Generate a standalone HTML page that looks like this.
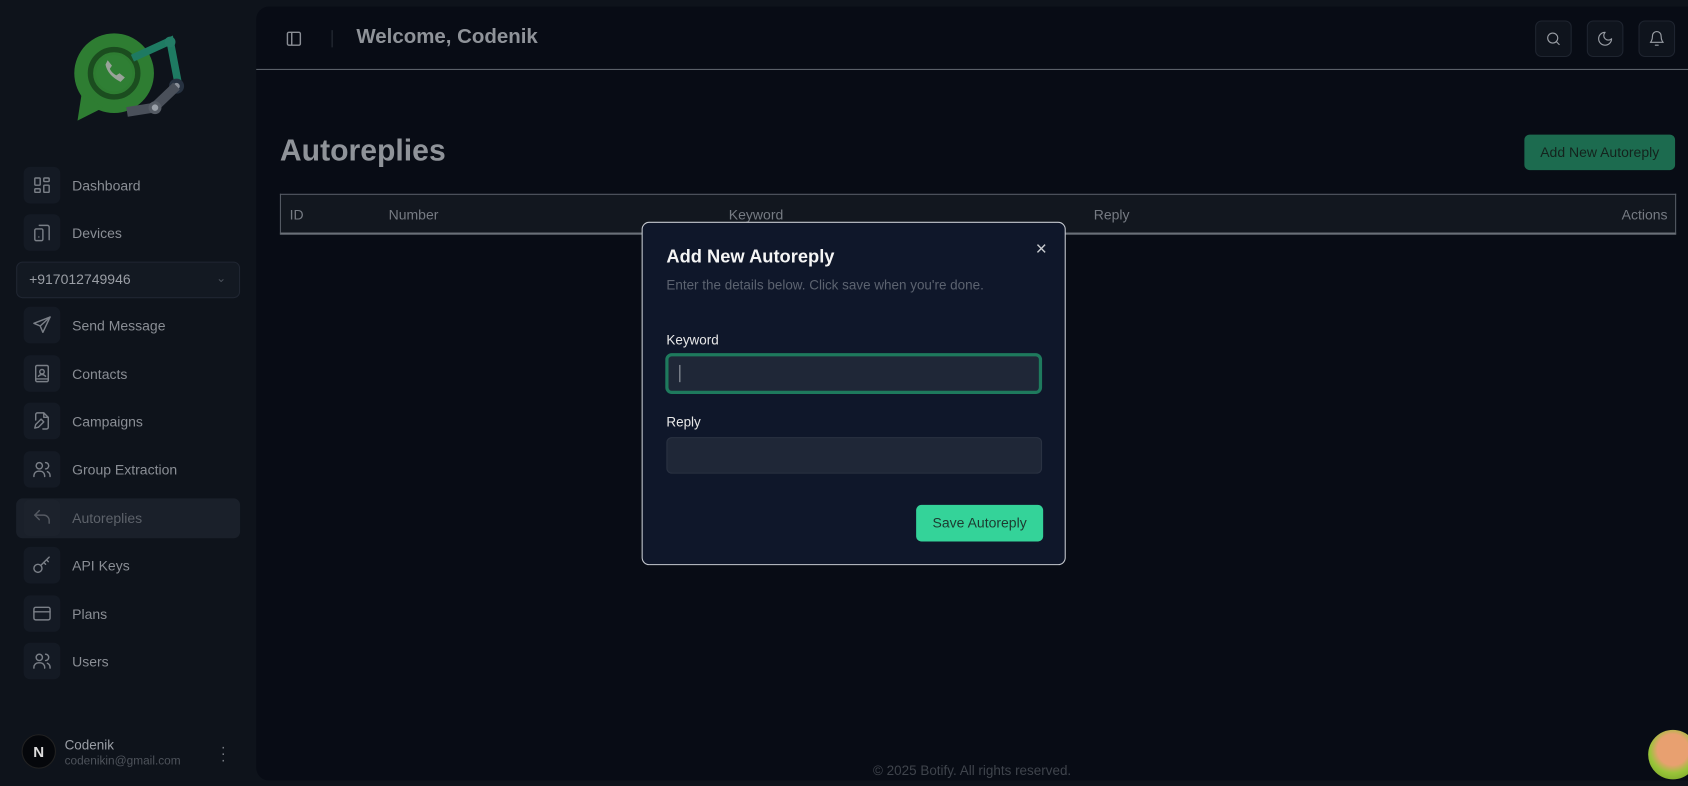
<!DOCTYPE html>
<html><head><meta charset="utf-8"><style>
*{box-sizing:border-box;margin:0;padding:0}
html,body{width:1688px;height:786px;overflow:hidden;background:#0e131b;font-family:"Liberation Sans",sans-serif}
#w{position:absolute;left:0;top:0;width:1568px;height:730px;transform:scale(1.07653);transform-origin:0 0;background:#0e131b}
.abs{position:absolute}
.side .it{position:absolute;left:22px;height:34px;display:flex;align-items:center;color:#8a8e95;font-size:13px}
.side .ic{width:34px;height:34px;border-radius:6px;background:#141a24;display:flex;align-items:center;justify-content:center;margin-right:11px}
.ic svg{width:20px;height:20px;fill:none;stroke:#7a7f87;stroke-width:1.6;stroke-linecap:round;stroke-linejoin:round}
.main{left:238px;top:6px;width:1330px;height:719px;background:#080c15;border-radius:12px 0 0 12px}
.hb{width:34px;height:34px;border:1px solid #1f2530;border-radius:6px;background:#0f141d;display:flex;align-items:center;justify-content:center;position:absolute;top:13px}
.hb svg{width:16px;height:16px;fill:none;stroke:#9a9ea5;stroke-width:1.6;stroke-linecap:round;stroke-linejoin:round}
</style></head><body><div id="w">
<div class="side">
 <svg class="abs" style="left:68px;top:30px" width="106" height="84" viewBox="0 0 106 84">
  <circle cx="38" cy="38" r="37" fill="#2e7d32"/>
  <polygon points="8,56 4,82 28,70" fill="#2e7d32"/>
  <circle cx="38" cy="38" r="22" fill="none" stroke="#1b4d1f" stroke-width="5"/>
  <circle cx="38" cy="38" r="17" fill="#2f7f34"/>
  <path d="M30 30 q2 10 14 16 l4-4 -5-4 -3 2 q-4-2-6-6 l2-3 -4-5z" fill="#9aa39a"/>
  <path d="M55 24 L90 8 L98 50" stroke="#1e7a62" stroke-width="7" fill="none"/>
  <circle cx="90" cy="9" r="5" fill="#237c66"/>
  <circle cx="96" cy="50" r="7" fill="#263140"/><circle cx="96" cy="50" r="3" fill="#8a9099"/>
  <path d="M96 50 L75 70 L50 74" stroke="#4a505a" stroke-width="9" fill="none"/>
  <circle cx="76" cy="70" r="6" fill="#555b64"/><circle cx="76" cy="70" r="3" fill="#9aa0a8"/>
 </svg>
 <div class="it" style="top:155px"><div class="ic"><svg viewBox="0 0 24 24"><rect x="4" y="4" width="6" height="8" rx="1"/><rect x="14" y="4" width="6" height="4" rx="1"/><rect x="14" y="12" width="6" height="8" rx="1"/><rect x="4" y="16" width="6" height="4" rx="1"/></svg></div>Dashboard</div>
 <div class="it" style="top:199px"><div class="ic"><svg viewBox="0 0 24 24"><rect x="4" y="8" width="9" height="13" rx="1.5"/><path d="M9 4h9a2 2 0 0 1 2 2v14"/><path d="M8.5 17h0"/></svg></div>Devices</div>
 <div class="abs" style="left:15px;top:243px;width:208px;height:34px;border:1px solid #202632;border-radius:6px;background:#131922;color:#9a9ea5;font-size:13px;padding:8px 11px">+917012749946<span style="position:absolute;right:12px;top:8px;color:#4a505a;font-size:11px">&#8964;</span></div>
 <div class="it" style="top:285px"><div class="ic"><svg viewBox="0 0 24 24"><path d="M21 3L3 10l7 3 3 7z"/><path d="M21 3L10 13"/></svg></div>Send Message</div>
 <div class="it" style="top:330px"><div class="ic"><svg viewBox="0 0 24 24"><rect x="5" y="3" width="14" height="18" rx="1.5"/><circle cx="12" cy="10" r="2.5"/><path d="M8 15q4-4 8 0M5 18h14"/></svg></div>Contacts</div>
 <div class="it" style="top:374px"><div class="ic"><svg viewBox="0 0 24 24"><path d="M14 3H7a2 2 0 0 0-2 2v6M14 3l5 5v11a2 2 0 0 1-2 2h-4M14 3v5h5"/><path d="M4 20l1-4 6-6 3 3-6 6z"/></svg></div>Campaigns</div>
 <div class="it" style="top:419px"><div class="ic"><svg viewBox="0 0 24 24"><circle cx="9" cy="8" r="3.5"/><path d="M3 20v-1a5 5 0 0 1 5-5h2a5 5 0 0 1 5 5v1M16 4.5a3.5 3.5 0 0 1 0 7M21 20v-1a5 5 0 0 0-3-4.5"/></svg></div>Group Extraction</div>
 <div class="abs" style="left:15px;top:463px;width:208px;height:37px;border-radius:6px;background:#1a202a"></div>
 <div class="it" style="top:464px;color:#5d626a"><div class="ic" style="background:#1c222c"><svg viewBox="0 0 24 24" style="stroke:#555a62"><path d="M9 14L4 9l5-5"/><path d="M4 9h10a6 6 0 0 1 6 6v3"/></svg></div>Autoreplies</div>
 <div class="it" style="top:508px"><div class="ic"><svg viewBox="0 0 24 24"><circle cx="7.5" cy="15.5" r="4.5"/><path d="M11 12l9-9M17 6l2 2M14 9l2 2"/></svg></div>API Keys</div>
 <div class="it" style="top:553px"><div class="ic"><svg viewBox="0 0 24 24"><rect x="3" y="5" width="18" height="14" rx="2"/><path d="M3 10h18"/></svg></div>Plans</div>
 <div class="it" style="top:597px"><div class="ic"><svg viewBox="0 0 24 24"><circle cx="9" cy="8" r="3.5"/><path d="M3 20v-1a5 5 0 0 1 5-5h2a5 5 0 0 1 5 5v1M16 4.5a3.5 3.5 0 0 1 0 7M21 20v-1a5 5 0 0 0-3-4.5"/></svg></div>Users</div>
 <div class="abs" style="left:20px;top:682px;width:32px;height:32px;border-radius:50%;background:#05070b;border:1px solid #222;color:#ddd;font-size:14px;font-weight:bold;text-align:center;line-height:30px">N</div>
 <div class="abs" style="left:60px;top:685px;color:#9a9ea5;font-size:12.5px">Codenik</div>
 <div class="abs" style="left:60px;top:701px;color:#4e535b;font-size:11px">codenikin@gmail.com</div>
 <div class="abs" style="left:205px;top:690px;color:#7a7f87;font-size:14px;line-height:6px">·<br>·<br>·</div>
</div>
<div class="abs main">
 <svg class="abs" style="left:27px;top:22px" width="16" height="16" viewBox="0 0 24 24" fill="none" stroke="#8a8e95" stroke-width="2"><rect x="3" y="3" width="18" height="18" rx="2"/><path d="M9 3v18"/></svg>
 <div class="abs" style="left:70px;top:22px;width:1px;height:16px;background:#2a303a"></div>
 <div class="abs" style="left:93px;top:18px;color:#8f9399;font-size:19px;font-weight:bold">Welcome, Codenik</div>
 <div class="hb" style="left:1188px"><svg viewBox="0 0 24 24"><circle cx="11" cy="11" r="7"/><path d="M20 20l-4-4"/></svg></div>
 <div class="hb" style="left:1236px"><svg viewBox="0 0 24 24"><path d="M12 3a6 6 0 0 0 9 9 9 9 0 1 1-9-9z"/></svg></div>
 <div class="hb" style="left:1284px"><svg viewBox="0 0 24 24"><path d="M6 8a6 6 0 0 1 12 0c0 7 3 9 3 9H3s3-2 3-9M10 21h4"/></svg></div>
 <div class="abs" style="left:0;top:58px;width:1330px;height:1px;background:#5d626b"></div>
 <div class="abs" style="left:22px;top:118px;color:#8f9399;font-size:28px;font-weight:bold">Autoreplies</div>
 <div class="abs" style="left:1178px;top:119px;width:140px;height:33px;border-radius:5px;background:#1c6b4f;color:#14231d;font-size:13px;text-align:center;line-height:33px">Add New Autoreply</div>
 <div class="abs" style="left:22px;top:174px;width:1297px;height:38px;background:#12171f;border:1px solid #555b64;border-bottom:2px solid #6a7078;color:#767b83;font-size:13px">
  <span class="abs" style="left:8px;top:11px">ID</span><span class="abs" style="left:100px;top:11px">Number</span><span class="abs" style="left:416px;top:11px">Keyword</span><span class="abs" style="left:755px;top:11px">Reply</span><span class="abs" style="right:7px;top:11px">Actions</span>
 </div>
 <div class="abs" style="left:0;top:703px;width:1330px;text-align:center;color:#3f444c;font-size:12.5px">© 2025 Botify. All rights reserved.</div>
</div>
<div class="abs" style="left:1531px;top:678px;width:46px;height:46px;border-radius:50%;background:radial-gradient(circle at 50% 40%,#e8a070 0 40%,#9ac43a 60%,#6a9a20 100%)"></div>
<div class="abs" style="left:596px;top:206px;width:394px;height:319px;background:#0f172a;border:1px solid #c5c9cf;border-radius:7px">
 <div class="abs" style="left:22px;top:22px;color:#f5f5f5;font-size:17px;font-weight:bold">Add New Autoreply</div>
 <div class="abs" style="left:365px;top:14px;color:#c9ccd0;font-size:18px">×</div>
 <div class="abs" style="left:22px;top:51px;color:#5c6370;font-size:12.5px">Enter the details below. Click save when you're done.</div>
 <div class="abs" style="left:22px;top:102px;color:#e8e8e8;font-size:12.5px">Keyword</div>
 <div class="abs" style="left:21px;top:121px;width:350px;height:38px;background:#1f2737;border:3px solid #1e7a5d;border-radius:6px"><div class="abs" style="left:10px;top:8px;width:1px;height:16px;background:#9aa0a8"></div></div>
 <div class="abs" style="left:22px;top:178px;color:#e8e8e8;font-size:12.5px">Reply</div>
 <div class="abs" style="left:22px;top:199px;width:349px;height:34px;background:#1f2737;border:1px solid #2a3242;border-radius:5px"></div>
 <div class="abs" style="left:254px;top:262px;width:118px;height:34px;background:#34d399;border-radius:5px;color:#1d3a30;font-size:13px;text-align:center;line-height:34px">Save Autoreply</div>
</div>
</div></body></html>
